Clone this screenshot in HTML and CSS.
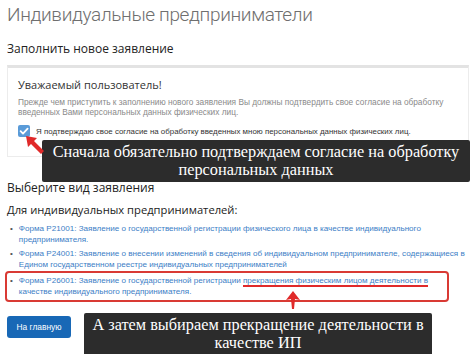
FILE: index.html
```html
<!DOCTYPE html>
<html lang="ru">
<head>
<meta charset="utf-8">
<title>Индивидуальные предприниматели</title>
<link rel="stylesheet" href="styles.css">
</head>
<body>
<div class="page">
  <h1 class="title">Индивидуальные предприниматели</h1>
  <h2 class="section">Заполнить новое заявление</h2>
  <div class="notice">
    <div class="notice-title">Уважаемый пользователь!</div>
    <p class="notice-text">Прежде чем приступить к заполнению нового заявления Вы должны подтвердить свое согласие на обработку введенных Вами персональных данных физических лиц.</p>
    <label class="agree">
      <span class="checkbox"><svg viewBox="0 0 12 12" width="12" height="12"><path d="M2.6 6.2 L5 8.6 L9.6 3.6" fill="none" stroke="#fff" stroke-width="1.8" stroke-linecap="round" stroke-linejoin="round"/></svg></span>
      <span>Я подтверждаю свое согласие на обработку введенных мною персональных данных физических лиц.</span>
    </label>
  </div>
  <h2 class="section choose">Выберите вид заявления</h2>
  <h3 class="sub">Для индивидуальных предпринимателей:</h3>
  <ul class="forms">
    <li><a href="#">Форма Р21001: Заявление о государственной регистрации физического лица в качестве индивидуального предпринимателя.</a></li>
    <li><a href="#">Форма Р24001: Заявление о внесении изменений в сведения об индивидуальном предпринимателе, содержащиеся в Едином государственном реестре индивидуальных предпринимателей</a></li>
    <li class="marked"><a href="#">Форма Р26001: Заявление о государственной регистрации <span class="under">прекращения физическим лицом деятельности в</span> качестве индивидуального предпринимателя.</a></li>
  </ul>
  <button class="home">На главную</button>

  <div class="hint hint-one">Сначала обязательно подтверждаем согласие на обработку<br>персональных данных</div>
  <div class="hint hint-two">А затем выбираем прекращение деятельности в<br>качестве ИП</div>
  <svg class="arrow arrow-one" viewBox="0 0 20 20" width="20" height="20"><polygon points="0,0 11,2 8,5 18,15 15,18 5,8 2,11" fill="#e02a2a"/></svg>
  <svg class="arrow arrow-two" viewBox="0 0 16 18" width="16" height="18"><polygon points="8,0 15,9 10,8 9,18 7,18 6,8 1,9" fill="#e02a2a"/></svg>
</div>
</body>
</html>
```
FILE: styles.css
```css
html, body {
  margin: 0;
  padding: 0;
  background: #fff;
}
.page {
  position: relative;
  width: 474px;
  height: 354px;
  overflow: hidden;
  padding: 0 5px 0 7px;
  box-sizing: border-box;
  font-family: "Open Sans", "Liberation Sans", sans-serif;
  color: #333;
}
.title {
  margin: 3px 0 0;
  font-family: Roboto, "Open Sans", sans-serif;
  font-weight: 300;
  font-size: 19px;
  letter-spacing: -0.35px;
  line-height: 24px;
  color: #6f6f6f;
}
.section {
  margin: 14px 0 0;
  font-weight: 400;
  font-size: 12px;
  line-height: 16px;
  color: #222;
}
.notice {
  margin-top: 8px;
  border: 1px solid #ececec;
  border-top: 3px solid #e3e3e3;
  padding: 10px 10px 14px;
  height: 92px;
  box-sizing: border-box;
}
.notice-title {
  font-size: 11px;
  line-height: 14px;
  color: #333;
}
.notice-text {
  margin: 6px 0 0;
  font-family: "Liberation Sans", Arial, sans-serif;
  font-size: 8.3px;
  line-height: 9.5px;
  color: #8a8a8a;
}
.agree {
  display: flex;
  align-items: center;
  gap: 6px;
  margin-top: 8px;
  font-family: "Liberation Sans", Arial, sans-serif;
  font-size: 7.9px;
  color: #333;
}
.checkbox {
  width: 12px;
  height: 12px;
  border-radius: 2px;
  background: #5a9bd8;
  display: flex;
}
.choose {
  margin-top: 23px;
}
.sub {
  margin: 6px 0 0;
  font-weight: 400;
  font-size: 11.2px;
  line-height: 16px;
  color: #222;
}
.forms {
  list-style: none;
  margin: 5px 0 0;
  padding: 0;
  font-family: "Liberation Sans", Arial, sans-serif;
  font-size: 8.1px;
  line-height: 11px;
}
.forms li {
  display: flex;
  gap: 6px;
  margin: 0 0 3px;
  padding-left: 3px;
}
.forms li::before {
  content: "•";
  color: #555;
  flex: none;
}
.forms a {
  color: #3c7ec6;
  text-decoration: none;
}
.forms li.marked {
  margin: -2px 20px 0 -2px;
  padding: 2px 3px 3px 3px;
  border: 2px solid #d93a34;
  border-radius: 4px;
}
.under {
  border-bottom: 2px solid #e02a2a;
}
.home {
  margin-top: 14px;
  width: 64px;
  height: 22px;
  border: none;
  border-radius: 3px;
  background: #1868b6;
  color: #fff;
  font-family: "Liberation Sans", Arial, sans-serif;
  font-size: 8.4px;
  padding: 0;
}
.hint {
  position: absolute;
  background: #2c2c2c;
  color: #fff;
  font-family: "Liberation Serif", "Times New Roman", serif;
  font-size: 16.3px;
  line-height: 18px;
  text-align: center;
  border-radius: 2px;
  padding: 3px 0;
  box-sizing: border-box;
}
.hint-one {
  left: 42px;
  top: 140px;
  width: 428px;
  height: 42px;
}
.hint-two {
  left: 84px;
  top: 313px;
  width: 348px;
  height: 48px;
}
.arrow {
  position: absolute;
}
.arrow-one {
  left: 26px;
  top: 136px;
}
.arrow-two {
  left: 285px;
  top: 291px;
}
```
